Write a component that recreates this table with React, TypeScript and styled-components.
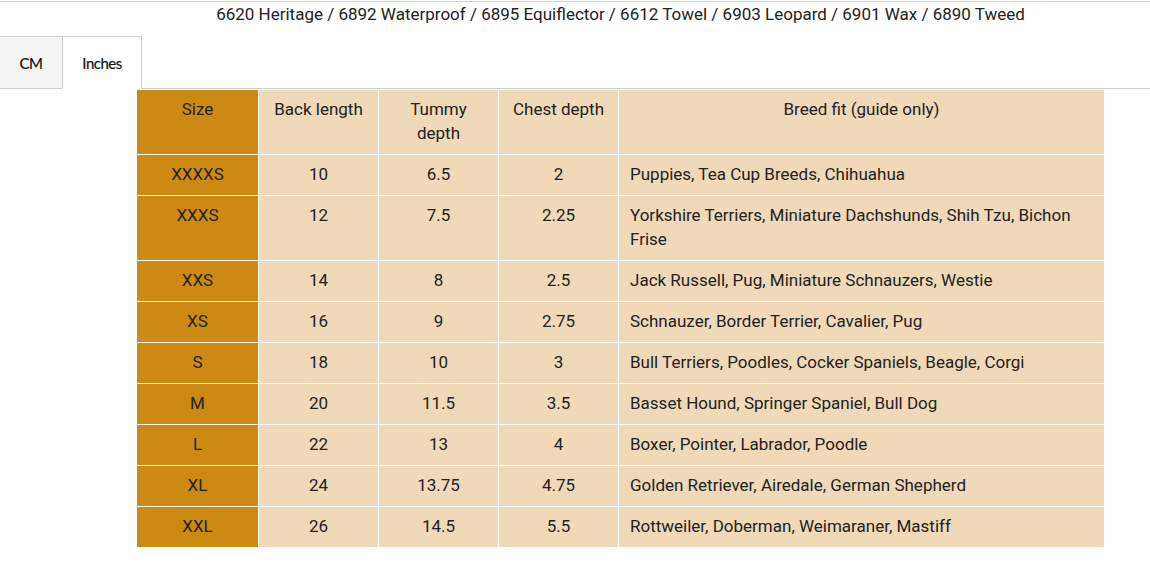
import React, { useState } from 'react'
import styled, { createGlobalStyle } from 'styled-components'

const GlobalStyle = createGlobalStyle`
  html, body {
    margin: 0;
    padding: 0;
    background: #fff;
    overflow: hidden;
  }
  body {
    font-family: Roboto, "Liberation Sans", Arial, sans-serif;
    color: #222;
  }
`

type Row = {
  size: string
  back: string
  tummy: string
  chest: string
  breeds: string
}

const ROWS: Row[] = [
  { size: 'XXXXS', back: '10', tummy: '6.5', chest: '2', breeds: 'Puppies, Tea Cup Breeds, Chihuahua' },
  {
    size: 'XXXS',
    back: '12',
    tummy: '7.5',
    chest: '2.25',
    breeds: 'Yorkshire Terriers, Miniature Dachshunds, Shih Tzu, Bichon Frise',
  },
  { size: 'XXS', back: '14', tummy: '8', chest: '2.5', breeds: 'Jack Russell, Pug, Miniature Schnauzers, Westie' },
  { size: 'XS', back: '16', tummy: '9', chest: '2.75', breeds: 'Schnauzer, Border Terrier, Cavalier, Pug' },
  { size: 'S', back: '18', tummy: '10', chest: '3', breeds: 'Bull Terriers, Poodles, Cocker Spaniels, Beagle, Corgi' },
  { size: 'M', back: '20', tummy: '11.5', chest: '3.5', breeds: 'Basset Hound, Springer Spaniel, Bull Dog' },
  { size: 'L', back: '22', tummy: '13', chest: '4', breeds: 'Boxer, Pointer, Labrador, Poodle' },
  { size: 'XL', back: '24', tummy: '13.75', chest: '4.75', breeds: 'Golden Retriever, Airedale, German Shepherd' },
  { size: 'XXL', back: '26', tummy: '14.5', chest: '5.5', breeds: 'Rottweiler, Doberman, Weimaraner, Mastiff' },
]

const TABS = ['CM', 'Inches']

export default function App() {
  const [tab, setTab] = useState('Inches')

  return (
    <Page>
      <GlobalStyle />
      <Title>6620 Heritage / 6892 Waterproof / 6895 Equiflector / 6612 Towel / 6903 Leopard / 6901 Wax / 6890 Tweed</Title>
      <TabList>
        {TABS.map((t) => (
          <Tab key={t} $active={t === tab} $width={t === 'CM' ? 63 : 80} onClick={() => setTab(t)}>
            {t}
          </Tab>
        ))}
      </TabList>
      <Panel>
        <SizeTable>
          <colgroup>
            <col style={{ width: 122 }} />
            <col style={{ width: 120 }} />
            <col style={{ width: 120 }} />
            <col style={{ width: 120 }} />
            <col />
          </colgroup>
          <thead>
            <tr>
              <SizeCell as="th">Size</SizeCell>
              <Cell as="th">Back length</Cell>
              <Cell as="th">Tummy depth</Cell>
              <Cell as="th">Chest depth</Cell>
              <Cell as="th">Breed fit (guide only)</Cell>
            </tr>
          </thead>
          <tbody>
            {ROWS.map((row) => (
              <tr key={row.size}>
                <SizeCell>{row.size}</SizeCell>
                <Cell>{row.back}</Cell>
                <Cell>{row.tummy}</Cell>
                <Cell>{row.chest}</Cell>
                <Cell $left>{row.breeds}</Cell>
              </tr>
            ))}
          </tbody>
        </SizeTable>
      </Panel>
    </Page>
  )
}

const Page = styled.div`
  margin-top: 1px;
  border-top: 1px solid #d4d4d4;
  width: 1150px;
`

const Title = styled.div`
  padding-left: 91px;
  margin-top: 1px;
  text-align: center;
  font-size: 17px;
  line-height: 22px;
  color: #222;
`

const TabList = styled.div`
  display: flex;
  margin-top: 11px;
  margin-bottom: -1px;
`

const Tab = styled.button<{ $active?: boolean; $width: number }>`
  box-sizing: border-box;
  width: ${(p) => p.$width}px;
  height: 53px;
  padding: 0;
  margin-left: -1px;
  font-family: Lato, "Open Sans", sans-serif;
  font-size: 15px;
  letter-spacing: -0.5px;
  -webkit-text-stroke: 0.2px #111;
  color: #111;
  background: ${(p) => (p.$active ? '#fff' : '#f4f4f4')};
  border: 1px solid #cfcfcf;
  border-bottom-color: ${(p) => (p.$active ? '#fff' : '#cfcfcf')};
  cursor: pointer;
  position: relative;
  z-index: 1;
  &:first-child {
    margin-left: 0;
    border-left: none;
  }
`

const Panel = styled.div`
  border-top: 1px solid #cfcfcf;
  padding-top: 1px;
  padding-left: 137px;
`

const SizeTable = styled.table`
  width: 969px;
  table-layout: fixed;
  border-collapse: collapse;
  font-size: 17px;
  line-height: 24px;
  margin: -1px 0 0 -1px;
`

const Cell = styled.td<{ $left?: boolean }>`
  padding: 7px 11px 9px;
  background: #f0d9b8;
  color: #222;
  border: 1px solid #fff;
  font-weight: 400;
  vertical-align: top;
  text-align: ${(p) => (p.$left ? 'left' : 'center')};
`

const SizeCell = styled(Cell)`
  background: #cc8a13;
`
